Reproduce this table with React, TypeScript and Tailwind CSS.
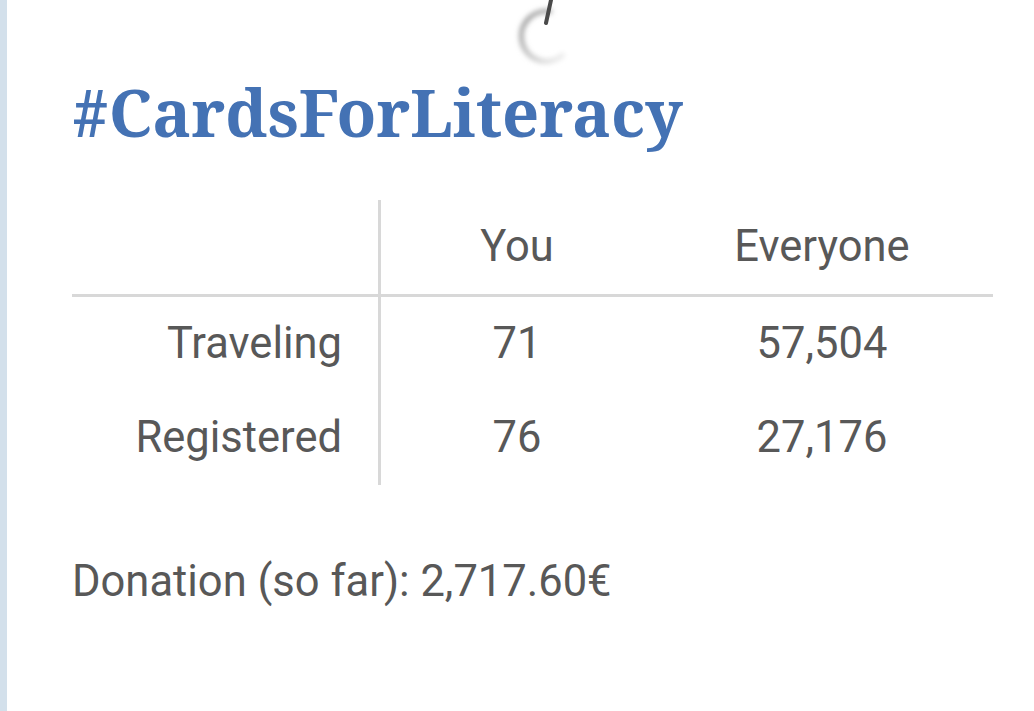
import React from 'react';

const rows = [
  { label: 'Traveling', you: '71', everyone: '57,504' },
  { label: 'Registered', you: '76', everyone: '27,176' },
];

function Hook() {
  return (
    <svg width="90" height="70" viewBox="0 0 90 70" className="absolute left-[493px] top-0">
      <defs>
        <filter id="blur" x="-50%" y="-50%" width="200%" height="200%">
          <feGaussianBlur stdDeviation="2.6" />
        </filter>
        <linearGradient id="shade" x1="0" y1="0" x2="1" y2="1">
          <stop offset="0" stopColor="#9a9a9a" />
          <stop offset="0.55" stopColor="#c4c4c4" />
          <stop offset="1" stopColor="#f2f2f2" />
        </linearGradient>
      </defs>
      <path d="M52 12 A 25 25 0 1 0 64 54" fill="none" stroke="url(#shade)" strokeWidth="5" filter="url(#blur)" />
      <path d="M51 0 L 46 23" stroke="#4a4a4a" strokeWidth="4" strokeLinecap="round" />
    </svg>
  );
}

export default function App() {
  return (
    <div className="relative w-[1034px] h-[711px] bg-white overflow-hidden border-l-[7px] border-[#d3e0eb]" style={{ fontFamily: 'Roboto, sans-serif' }}>
      <Hook />
      <div className="pl-[65px] pt-[72px]">
        <h1 className="text-[65px] leading-[80px] font-bold text-[#4472b4]" style={{ fontFamily: '"Noto Serif", "DejaVu Serif Condensed", "DejaVu Serif", serif' }}>
          #CardsForLiteracy
        </h1>

        <div className="mt-[48px] w-[921px] grid grid-cols-[309px_270px_1fr] text-[43.5px] text-[#585858]">
          <div className="h-[97px] border-r-[3px] border-[#d8d8d8] border-b-[3px]" />
          <div className="h-[97px] flex items-center justify-center border-b-[3px] border-[#d8d8d8] pl-[2px]">You</div>
          <div className="h-[97px] flex items-center justify-center border-b-[3px] border-[#d8d8d8]">Everyone</div>
          {rows.map((r) => (
            <React.Fragment key={r.label}>
              <div className="h-[94px] flex items-center justify-end pr-[36px] border-r-[3px] border-[#d8d8d8]">{r.label}</div>
              <div className="h-[94px] flex items-center justify-center pl-[2px]">{r.you}</div>
              <div className="h-[94px] flex items-center justify-center">{r.everyone}</div>
            </React.Fragment>
          ))}
        </div>

        <p className="mt-[64px] text-[43.5px] text-[#585858]">Donation (so far): 2,717.60€</p>
      </div>
    </div>
  );
}
